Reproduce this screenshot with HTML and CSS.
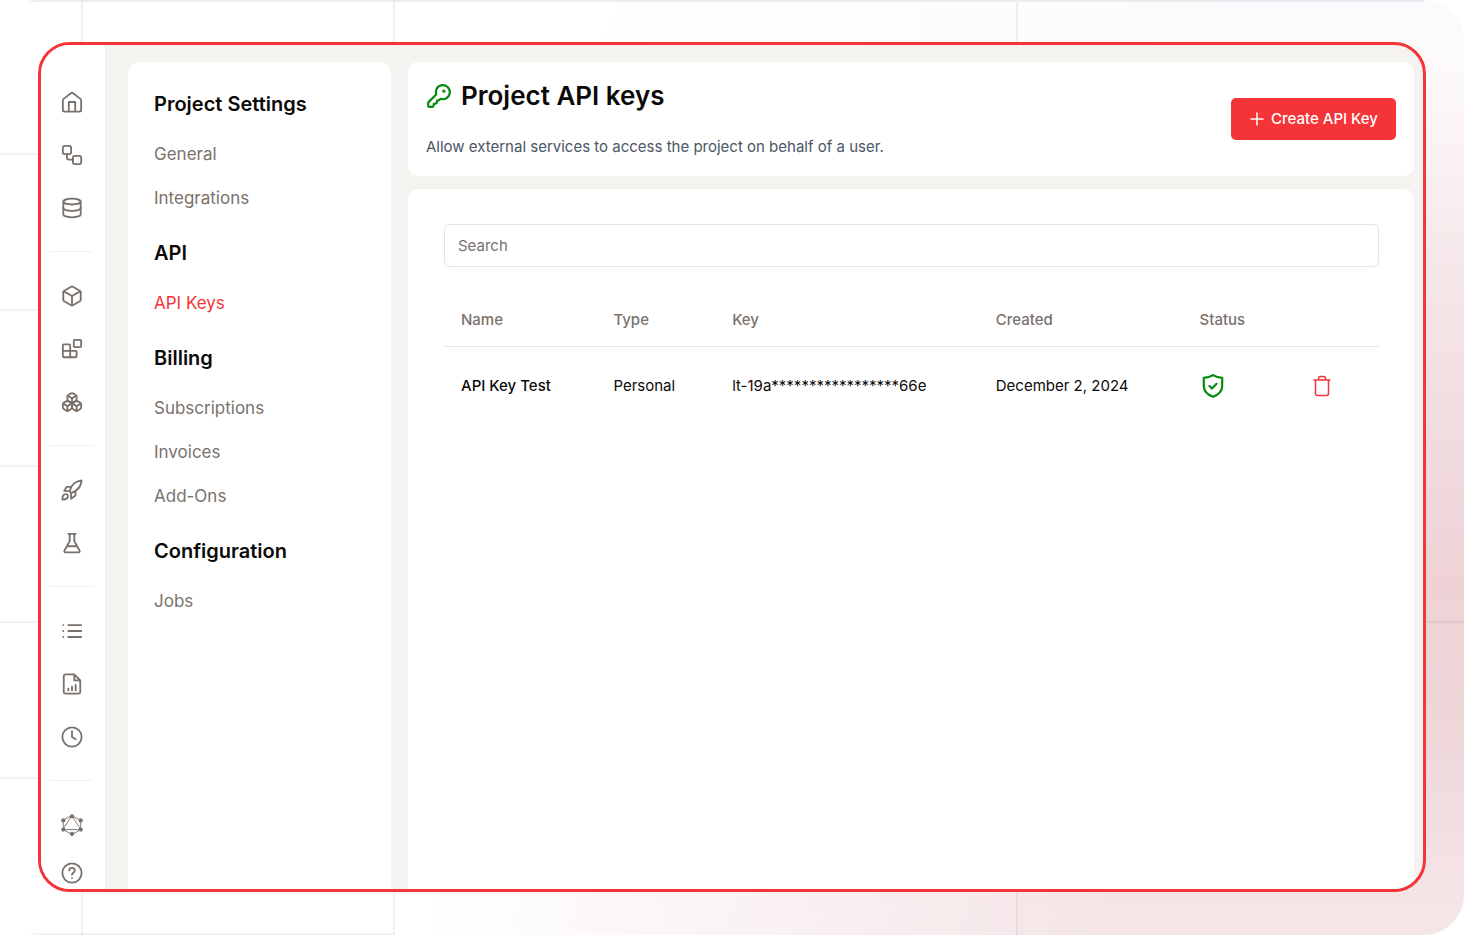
FILE: index.html
```html
<!DOCTYPE html>
<html lang="en">
<head>
<meta charset="utf-8">
<meta name="viewport" content="width=device-width, initial-scale=1">
<title>Project API keys</title>
<link rel="stylesheet" href="styles.css">
</head>
<body>
<div class="backdrop">
  <div class="app">
    <nav class="rail" aria-label="Main">
      <div class="rail-group">
        <a href="#" aria-label="Home"><svg class="icon" viewBox="0 0 24 24"><path d="M2 10.200a2 2 0 0 1 .8-1.600l8-6.200a2 2 0 0 1 2.400 0l8 6.200a2 2 0 0 1 .8 1.600V20.500a2 2 0 0 1-2 2H4a2 2 0 0 1-2-2z"/><path d="M8.500 22V12h7v10"/></svg></a>
        <a href="#" aria-label="Workflows"><svg class="icon" viewBox="0 0 24 24"><rect x="2" y="2" width="9" height="9" rx="2"/><path d="M6.500 11v4a2 2 0 0 0 2 2H13"/><rect x="13" y="13" width="9" height="9" rx="2"/></svg></a>
        <a href="#" aria-label="Data"><svg class="icon" viewBox="0 0 24 24"><ellipse cx="12" cy="5" rx="9.500" ry="3.200"/><path d="M2.500 5v14c0 1.700 4.200 3.200 9.500 3.200s9.500-1.500 9.500-3.200V5"/><path d="M2.500 12c0 1.700 4.200 3.200 9.500 3.200s9.500-1.500 9.500-3.200"/></svg></a>
      </div>
      <hr class="rail-line">
      <div class="rail-group">
        <a href="#" aria-label="Models"><svg class="icon" viewBox="0 0 24 24"><path d="M21.500 8a2 2 0 0 0-1-1.730l-7.500-4.300a2 2 0 0 0-2 0L3.500 6.270A2 2 0 0 0 2.500 8v8a2 2 0 0 0 1 1.730l7.500 4.300a2 2 0 0 0 2 0l7.500-4.300A2 2 0 0 0 21.500 16Z"/><path d="m3 7 9 5 9-5M12 22V12"/></svg></a>
        <a href="#" aria-label="Blocks"><svg class="icon" viewBox="0 0 24 24"><rect x="14" y="2" width="8" height="8" rx="1"/><path d="M10 21V8a1 1 0 0 0-1-1H3a1 1 0 0 0-1 1v12a1 1 0 0 0 1 1h13a1 1 0 0 0 1-1v-5a1 1 0 0 0-1-1H2"/></svg></a>
        <a href="#" aria-label="Packages"><svg class="icon" viewBox="0 0 24 24"><path d="M2.970 12.920A2 2 0 0 0 2 14.630v3.240a2 2 0 0 0 .97 1.710l3 1.800a2 2 0 0 0 2.060 0L12 19v-5.500l-5-3-4.030 2.420Z"/><path d="m7 16.500-4.740-2.850M7 16.500l5-3M7 16.500v5.170"/><path d="M12 13.500V19l3.970 2.380a2 2 0 0 0 2.060 0l3-1.800a2 2 0 0 0 .97-1.710v-3.240a2 2 0 0 0-.97-1.710L17 10.500l-5 3Z"/><path d="m17 16.500-5-3M17 16.500l4.740-2.850M17 16.500v5.170"/><path d="M7.970 4.420A2 2 0 0 0 7 6.130v4.370l5 3 5-3V6.130a2 2 0 0 0-.97-1.710l-3-1.800a2 2 0 0 0-2.060 0l-3 1.800Z"/><path d="M12 8 7.260 5.150M12 8l4.740-2.850M12 13.500V8"/></svg></a>
      </div>
      <hr class="rail-line">
      <div class="rail-group">
        <a href="#" aria-label="Deployments"><svg class="icon" viewBox="0 0 24 24"><path d="M9.500 13C11 7 15 2.500 22.500 1.500c-.5 7-5 11.500-11.500 14zM10.500 8.500H6.300L3.500 13l6 .2M15.800 13.500v4.500L11 21.500V15.500M1.500 22.500c0-4 1-6 3.500-6 2 0 3 1.500 2.500 3s-2.500 3-6 3Z"/></svg></a>
        <a href="#" aria-label="Experiments"><svg class="icon" viewBox="0 0 24 24"><path d="M9.500 2v8L3.700 20.500a1.200 1.200 0 0 0 1 1.700h14.600a1.200 1.200 0 0 0 1-1.700L14.500 10V2M8 2h8M6.500 15.500h11"/></svg></a>
      </div>
      <hr class="rail-line">
      <div class="rail-group">
        <a href="#" aria-label="Logs"><svg class="icon" viewBox="0 0 24 24"><path d="M8 5.500h14M8 12h14M8 18.500h14M2.500 5.500h.01M2.500 12h.01M2.500 18.500h.01"/></svg></a>
        <a href="#" aria-label="Reports"><svg class="icon" viewBox="0 0 24 24"><path d="M14.500 1.500H5a2 2 0 0 0-2 2v17a2 2 0 0 0 2 2h14a2 2 0 0 0 2-2V8zM14.500 2v6H21M8 19v-2M12 19v-4M16 19v-6"/></svg></a>
        <a href="#" aria-label="History"><svg class="icon" viewBox="0 0 24 24"><circle cx="12" cy="12" r="10.500"/><path d="M12 5.500V12l4 2.500"/></svg></a>
      </div>
      <hr class="rail-line">
      <div class="rail-group rail-group-tight">
        <a href="#" aria-label="GraphQL"><svg class="icon icon-graph" viewBox="0 0 24 24"><path d="m12 2 9.500 5v10L12 22.500 2.500 17V7zM12 2l9.500 15h-19z"/><g class="dots"><circle cx="12" cy="2.500" r="2.300"/><circle cx="21.500" cy="7" r="2.300"/><circle cx="21.500" cy="17" r="2.300"/><circle cx="12" cy="21.700" r="2.300"/><circle cx="2.500" cy="17" r="2.300"/><circle cx="2.500" cy="7" r="2.300"/></g></svg></a>
        <a href="#" aria-label="Help"><svg class="icon" viewBox="0 0 24 24"><circle cx="12" cy="12" r="10.500"/><path d="M9 9.200a3 3 0 0 1 6 .3c0 2-3 2.400-3 4.300M12 17.500h.01"/></svg></a>
      </div>
    </nav>

    <div class="workspace">
      <aside class="settings">
        <section>
          <h2>Project Settings</h2>
          <ul><li><a href="#">General</a></li><li><a href="#">Integrations</a></li></ul>
        </section>
        <section>
          <h2>API</h2>
          <ul><li><a href="#" class="current" aria-current="page">API Keys</a></li></ul>
        </section>
        <section>
          <h2>Billing</h2>
          <ul><li><a href="#">Subscriptions</a></li><li><a href="#">Invoices</a></li><li><a href="#">Add-Ons</a></li></ul>
        </section>
        <section>
          <h2>Configuration</h2>
          <ul><li><a href="#">Jobs</a></li></ul>
        </section>
      </aside>

      <main class="content">
        <header class="card page-head">
          <div class="page-intro">
            <h1><svg class="key-icon" viewBox="0 0 24 24"><path d="M2.586 17.414A2 2 0 0 0 2 18.828V21a1 1 0 0 0 1 1h3a1 1 0 0 0 1-1v-1a1 1 0 0 1 1-1h1a1 1 0 0 0 1-1v-1a1 1 0 0 1 1-1h.172a2 2 0 0 0 1.414-.586l.814-.814a6.500 6.500 0 1 0-4-4z"/><circle class="dot" cx="16.500" cy="7.500" r=".6"/></svg>Project API keys</h1>
            <p>Allow external services to access the project on behalf of a user.</p>
          </div>
          <button type="button" class="create"><svg viewBox="0 0 12 12"><path d="M6 0v12M0 6h12"/></svg>Create API Key</button>
        </header>
        <section class="card keys">
          <input class="search" type="search" placeholder="Search" aria-label="Search">
          <table>
            <colgroup><col class="c-name"><col class="c-type"><col class="c-key"><col class="c-created"><col class="c-status"><col></colgroup>
            <thead><tr><th>Name</th><th>Type</th><th>Key</th><th>Created</th><th>Status</th><th></th></tr></thead>
            <tbody><tr>
              <td class="name">API Key Test</td><td>Personal</td><td>lt-19a*****************66e</td><td>December 2, 2024</td>
              <td><svg class="shield" viewBox="0 0 24 24" role="img" aria-label="Active"><path d="M12 2c2.500 1.600 5.300 2.300 8.500 2.500V12c0 5-3.500 8-8.500 10-5-2-8.500-5-8.500-10V4.500C6.700 4.300 9.500 3.600 12 2Z"/><path d="m8.700 12 2.300 2.300 4.300-4.300"/></svg></td>
              <td><button type="button" class="delete" aria-label="Delete key"><svg viewBox="0 0 20 22"><path d="M2 5h16M3.500 5v13.500a2 2 0 0 0 2 2h9a2 2 0 0 0 2-2V5M6.500 5V3.500a2 2 0 0 1 2-2h3a2 2 0 0 1 2 2V5"/></svg></button></td>
            </tr></tbody>
          </table>
        </section>
      </main>
    </div>
  </div>
</div>
</body>
</html>
```
FILE: styles.css
```css
* { box-sizing: border-box; }

body {
  margin: 0;
  background: #fff;
  color: #0c0a09;
  font-family: Inter, "Liberation Sans", sans-serif;
  font-size: 15px;
}

h1, h2, p, ul { margin: 0; padding: 0; }
ul { list-style: none; }
a { color: inherit; text-decoration: none; }
svg { display: block; fill: none; stroke: currentColor; stroke-linecap: round; stroke-linejoin: round; }

.backdrop {
  --rule: rgba(20, 20, 40, 0.06);
  --rule-soft: rgba(20, 20, 40, 0.05);
  display: flex;
  min-height: 100vh;
  padding: 42px 38px 43px;
  border-radius: 40px;
  background:
    linear-gradient(#ebebf0, #ebebf0) 28px 0 / calc(100% - 68px) 2px no-repeat,
    linear-gradient(var(--rule), var(--rule)) 81px 0 / 2px 100% no-repeat,
    linear-gradient(var(--rule), var(--rule)) 393px 0 / 2px 100% no-repeat,
    linear-gradient(var(--rule), var(--rule)) 1016px 0 / 2px 100% no-repeat,
    linear-gradient(var(--rule-soft), var(--rule-soft)) 0 153px / 40px 2px no-repeat,
    linear-gradient(var(--rule-soft), var(--rule-soft)) 0 309px / 40px 2px no-repeat,
    linear-gradient(var(--rule-soft), var(--rule-soft)) 0 465px / 40px 2px no-repeat,
    linear-gradient(var(--rule), var(--rule)) 0 621px / 100% 2px no-repeat,
    linear-gradient(var(--rule-soft), var(--rule-soft)) 0 777px / 40px 2px no-repeat,
    linear-gradient(var(--rule), var(--rule)) 28px 100% / 366px 2px no-repeat,
    linear-gradient(100deg, #fff 36%, rgba(255, 255, 255, 0) 78%),
    linear-gradient(#fbfafc 2%, #fdf9fa 8%, #f5e6e8 30%, #eed2d6 62%, #eed5d8 76%, #f5e5e7 97%);
}

.app {
  display: flex;
  flex: 1;
  min-width: 0;
  overflow: hidden;
  border: 3px solid #f43437;
  border-radius: 32px;
  background: #f4f3ef;
}

.rail {
  flex: 0 0 66px;
  padding: 46px 12px 0 9px;
  border-right: 2px solid #eeeeee;
  background: #fff;
  color: #79716b;
}
.rail-group { display: grid; gap: 31px; justify-items: center; }
.rail-group-tight { gap: 26px; }
.rail-line { height: 1px; margin: 32px 0 33px; border: 0; background: #f3efea; }
.icon { width: 22px; height: 22px; stroke-width: 2; }
.icon-graph { stroke-width: 1; }
.icon-graph .dots { fill: currentColor; stroke: none; }

.workspace {
  display: grid;
  flex: 1;
  grid-template-columns: 263px minmax(0, 1fr);
  gap: 17px;
  min-width: 0;
  padding: 17px 9px 0 21px;
}

.settings {
  display: grid;
  align-content: start;
  gap: 29px;
  padding: 28px 26px;
  border-radius: 12px 12px 0 0;
  background: #fff;
}
.settings h2 { margin-bottom: 24px; font-size: 20px; font-weight: 600; line-height: 28px; }
.settings ul { display: grid; gap: 20px; color: #79716b; font-size: 17px; line-height: 24px; }
.settings .current { color: #f43437; }

.content { display: flex; flex-direction: column; gap: 13px; min-width: 0; }
.card { border-radius: 10px; background: #fff; }

.page-head {
  display: flex;
  align-items: center;
  justify-content: space-between;
  gap: 24px;
  padding: 17px 18px;
}
h1 { display: flex; align-items: center; gap: 9px; font-size: 26px; font-weight: 600; line-height: 34px; }
.key-icon { width: 26px; height: 28px; color: #008a0c; stroke-width: 2; }
.key-icon .dot { fill: currentColor; }
.page-intro p { margin-top: 22px; color: #4a5565; font-size: 15px; line-height: 24px; }

.create {
  display: flex;
  flex: none;
  align-items: center;
  gap: 8px;
  height: 42px;
  padding: 0 18px 0 20px;
  border: 0;
  border-radius: 5px;
  background: #f43437;
  color: #fff;
  font: 500 15px/24px Inter, "Liberation Sans", sans-serif;
}
.create svg { width: 12px; height: 12px; overflow: visible; stroke-width: 1.500; }

.keys { flex: 1; padding: 35px 35px 35px 36px; border-radius: 10px 10px 0 0; }
.search {
  display: block;
  width: 100%;
  height: 43px;
  padding: 0 13px;
  border: 1px solid #e5e5e5;
  border-radius: 6px;
  background: #fff;
  font: 15px/24px Inter, "Liberation Sans", sans-serif;
}
.search::placeholder { color: #79716b; opacity: 1; }

table { width: 100%; margin-top: 27px; border-collapse: collapse; table-layout: fixed; }
.c-name { width: 16.3%; }
.c-type { width: 12.7%; }
.c-key { width: 28.2%; }
.c-created { width: 21.8%; }
.c-status { width: 12%; }
th, td { padding: 0 0 0 17px; text-align: left; white-space: nowrap; line-height: 24px; }
th { height: 52px; border-bottom: 1px solid #e5e5e5; color: #79716b; font-weight: 500; }
td { height: 79px; }
.name { font-weight: 500; }
.shield { width: 26px; height: 26px; color: #008a0c; stroke-width: 2; }
.delete { display: block; padding: 0; border: 0; background: none; color: #f43437; }
.delete svg { width: 20px; height: 22px; stroke-width: 1.500; }
```
